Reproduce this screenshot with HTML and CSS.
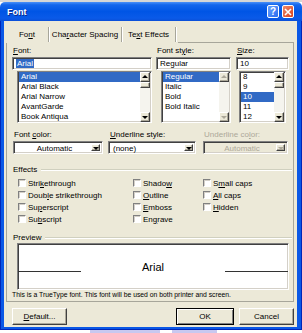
FILE: index.html
```html
<!DOCTYPE html>
<html lang="en">
<head>
  <meta charset="UTF-8" />
  <title>Font</title>
  <link rel="stylesheet" href="styles.css">
</head>
<body>

<div class="desk-top"></div>

<div class="window">
  <div class="titlebar">
    <span class="title">Font</span>
    <div class="caption-buttons">
      <span class="cap-btn help">?</span>
      <span class="cap-btn close">
        <svg width="8" height="8" viewBox="0 0 8 8"><path d="M1 1L7 7M7 1L1 7" stroke="#fff" stroke-width="1.6" /></svg>
      </span>
    </div>
  </div>

  <div class="frame">
    <div class="client">

      <div class="tabs">
        <span class="tab tab-font">Fo<u>n</u>t</span>
        <span class="tab tab-spacing">Cha<u>r</u>acter Spacing</span>
        <span class="tab tab-effects">Te<u>x</u>t Effects</span>
        <span class="tab-rest"></span>
      </div>

      <div class="panel">

        <div class="font-row">
          <div class="col col-font">
            <div class="label"><u>F</u>ont:</div>
            <div class="field"><span class="sel-text">Arial</span></div>
            <div class="listbox">
              <div class="items">
                <div class="item selected">Arial</div>
                <div class="item">Arial Black</div>
                <div class="item">Arial Narrow</div>
                <div class="item">AvantGarde</div>
                <div class="item">Book Antiqua</div>
              </div>
              <div class="scrollbar">
                <span class="sb-btn up"></span>
                <span class="sb-thumb"></span>
                <span class="sb-track"></span>
                <span class="sb-btn down"></span>
              </div>
            </div>
          </div>

          <div class="col col-style">
            <div class="label">Font st<u>y</u>le:</div>
            <div class="field">Regular</div>
            <div class="listbox">
              <div class="items">
                <div class="item selected">Regular</div>
                <div class="item">Italic</div>
                <div class="item">Bold</div>
                <div class="item">Bold Italic</div>
              </div>
              <div class="scrollbar disabled">
                <span class="sb-btn up"></span>
                <span class="sb-track"></span>
                <span class="sb-btn down"></span>
              </div>
            </div>
          </div>

          <div class="col col-size">
            <div class="label"><u>S</u>ize:</div>
            <div class="field">10</div>
            <div class="listbox">
              <div class="items">
                <div class="item">8</div>
                <div class="item">9</div>
                <div class="item selected">10</div>
                <div class="item">11</div>
                <div class="item">12</div>
              </div>
              <div class="scrollbar">
                <span class="sb-btn up"></span>
                <span class="sb-thumb"></span>
                <span class="sb-track"></span>
                <span class="sb-btn down"></span>
              </div>
            </div>
          </div>
        </div>

        <div class="combo-row">
          <div class="combo-col">
            <div class="label">Font <u>c</u>olor:</div>
            <div class="combo combo-color">
              <span class="combo-value centered">Automatic</span>
              <span class="drop-btn"></span>
            </div>
          </div>
          <div class="combo-col">
            <div class="label indent"><u>U</u>nderline style:</div>
            <div class="combo combo-underline">
              <span class="combo-value">(none)</span>
              <span class="drop-btn"></span>
            </div>
          </div>
          <div class="combo-col disabled">
            <div class="label">Underline co<u>l</u>or:</div>
            <div class="combo combo-ucolor">
              <span class="combo-value centered">Automatic</span>
              <span class="drop-btn"></span>
            </div>
          </div>
        </div>

        <div class="group-head effects-head"><span>Effects</span><span class="rule"></span></div>

        <div class="effects">
          <label class="check"><span class="box"></span><span>Stri<u>k</u>ethrough</span></label>
          <label class="check"><span class="box"></span><span>Doub<u>l</u>e strikethrough</span></label>
          <label class="check"><span class="box"></span><span>Su<u>p</u>erscript</span></label>
          <label class="check"><span class="box"></span><span>Su<u>b</u>script</span></label>
          <label class="check"><span class="box"></span><span>Shado<u>w</u></span></label>
          <label class="check"><span class="box"></span><span><u>O</u>utline</span></label>
          <label class="check"><span class="box"></span><span><u>E</u>mboss</span></label>
          <label class="check"><span class="box"></span><span>En<u>g</u>rave</span></label>
          <label class="check"><span class="box"></span><span>S<u>m</u>all caps</span></label>
          <label class="check"><span class="box"></span><span><u>A</u>ll caps</span></label>
          <label class="check"><span class="box"></span><span><u>H</u>idden</span></label>
        </div>

        <div class="group-head preview-head"><span>Preview</span><span class="rule"></span></div>

        <div class="preview">
          <span class="base-line"></span>
          <span class="sample">Arial</span>
          <span class="base-line"></span>
        </div>

        <p class="note">This is a TrueType font. This font will be used on both printer and screen.</p>
      </div>

      <div class="buttons">
        <button class="btn btn-default"><u>D</u>efault...</button>
        <button class="btn btn-ok">OK</button>
        <button class="btn btn-cancel">Cancel</button>
      </div>

    </div>
  </div>
</div>

<div class="desk-bottom">
  <span class="patch patch-a"></span>
  <span class="patch patch-b"></span>
</div>

</body>
</html>
```

FILE: styles.css
```css
* {
  box-sizing: border-box;
}

body {
  margin: 0;
  width: 302px;
  height: 333px;
  overflow: hidden;
  background: #fff;
  font-family: "Liberation Sans", Arial, sans-serif;
  font-size: 8px;
  color: #000;
}

u {
  text-underline-offset: 1px;
}

.desk-top {
  height: 2px;
  background: #d6d6d6;
}

/* window frame */

.window {
  height: 328px;
  display: flex;
  flex-direction: column;
}

.titlebar {
  height: 19px;
  display: flex;
  align-items: center;
  justify-content: space-between;
  padding: 0 8px 0 7px;
  border-radius: 5px 5px 0 0;
  background: linear-gradient(#4a90f8 0%, #1466ec 15%, #0055e5 50%, #0a5ae8 85%, #0a4fd8 100%);
}

.title {
  color: #fff;
  font-weight: bold;
  font-size: 9px;
  text-shadow: 1px 1px #0a2a8a;
}

.caption-buttons {
  display: flex;
  gap: 3px;
}

.cap-btn {
  width: 12px;
  height: 13px;
  border: 1px solid #fff;
  border-radius: 2px;
  display: flex;
  align-items: center;
  justify-content: center;
  color: #fff;
  font-weight: bold;
  font-size: 10px;
}

.help {
  background: linear-gradient(135deg, #6aa2ff, #2a6cf0);
}

.close {
  background: linear-gradient(135deg, #f08a6a, #d8401c);
}

.frame {
  flex: 1;
  display: flex;
  padding: 0 5px 3px 4px;
  background: #0a58e6;
  box-shadow: inset 1px 0 #0026b8, inset -1px 0 #0026b8, inset 0 -1px #0026b8;
}

.client {
  flex: 1;
  background: #ece9d8;
  padding: 6px 3px 0 2px;
  display: flex;
  flex-direction: column;
}

/* tabs */

.tabs {
  height: 16px;
  display: flex;
}

.tab {
  height: 15px;
  line-height: 15px;
  text-align: center;
  border-right: 1px solid #a7a69a;
  box-shadow: 1px 0 #fff;
}

.tab-font {
  width: 43px;
}

.tab-spacing {
  width: 73px;
}

.tab-effects {
  width: 54px;
}

.tab-rest {
  flex: 1;
  border-bottom: 1px solid #a7a69a;
  margin-left: 2px;
}

.panel {
  height: 259px;
  border: 1px solid #a7a69a;
  border-top: none;
  padding: 3px 4px 0 5px;
}

/* font / style / size */

.font-row {
  display: flex;
}

.col-font {
  width: 144px;
}

.col-style {
  width: 80px;
}

.col-size {
  width: 53px;
}

.label {
  height: 10px;
  line-height: 10px;
  padding-left: 1px;
  white-space: nowrap;
}

.label.indent {
  padding-left: 2px;
}

.field,
.listbox,
.combo,
.preview {
  background: #fff;
  border: 1px solid;
  border-color: #808080 #fff #fff #808080;
  box-shadow: inset 1px 1px #404040, inset -1px -1px #d4d0c8;
}

.field {
  margin-top: 1px;
  height: 13px;
  line-height: 11px;
  padding-left: 3px;
}

.col-font .field {
  width: 140px;
}

.col-style .field {
  width: 75px;
}

.col-size .field {
  width: 53px;
}

.sel-text {
  background: #316ac5;
  color: #fff;
  padding: 0 1px;
}

.listbox {
  margin-top: 1px;
  height: 52px;
  padding: 0 1px 0 1px;
  display: flex;
}

.col-font .listbox {
  margin-left: 5px;
  width: 135px;
}

.col-style .listbox {
  margin-left: 5px;
  width: 70px;
}

.col-size .listbox {
  margin-left: 3px;
  width: 47px;
}

.items {
  flex: 1;
  overflow: hidden;
}

.item {
  height: 10px;
  line-height: 10px;
  padding-left: 2px;
  white-space: nowrap;
}

.item.selected {
  background: #316ac5;
  color: #fff;
}

.scrollbar {
  width: 10px;
  display: flex;
  flex-direction: column;
}

.sb-btn,
.sb-thumb,
.drop-btn {
  background: #ece9d8;
  border: 1px solid;
  border-color: #fff #404040 #404040 #fff;
  box-shadow: inset -1px -1px #aca899;
  position: relative;
}

.sb-btn {
  height: 10px;
}

.sb-thumb {
  height: 6px;
}

.sb-track {
  flex: 1;
  background: #f5f4ee;
}

.sb-btn::after,
.drop-btn::after {
  content: "";
  position: absolute;
  left: 50%;
  top: 50%;
  margin-left: -3px;
  border-left: 3px solid transparent;
  border-right: 3px solid transparent;
}

.sb-btn.up::after {
  margin-top: -2px;
  border-bottom: 3px solid #000;
}

.sb-btn.down::after,
.drop-btn::after {
  margin-top: -1px;
  border-top: 3px solid #000;
}

.scrollbar.disabled .sb-btn.up::after {
  border-bottom-color: #aca899;
}

.scrollbar.disabled .sb-btn.down::after {
  border-top-color: #aca899;
}

/* combos */

.combo-row {
  margin-top: 7px;
  margin-left: 1px;
  display: grid;
  grid-template-columns: 95px 95px 85px;
}

.combo {
  margin-top: 1px;
  height: 13px;
  display: flex;
  padding: 2px;
}

.combo-color {
  width: 90px;
}

.combo-underline {
  width: 88px;
}

.combo-ucolor {
  width: 85px;
}

.combo-value {
  flex: 1;
  line-height: 9px;
  padding-left: 2px;
}

.combo-value.centered {
  text-align: center;
}

.drop-btn {
  width: 9px;
}

.combo-col.disabled {
  color: #aca899;
}

.combo-col.disabled .combo {
  background: #ece9d8;
}

.combo-col.disabled .drop-btn::after {
  border-top-color: #aca899;
}

/* groups */

.group-head {
  height: 10px;
  line-height: 10px;
  display: flex;
  align-items: center;
  padding-left: 1px;
}

.group-head .rule {
  flex: 1;
  margin-left: 4px;
  margin-right: -3px;
  border-top: 1px solid #d0d0bf;
  border-bottom: 1px solid #fff;
}

.effects-head {
  margin-top: 11px;
}

.effects {
  margin-top: 2px;
  margin-left: 6px;
  display: grid;
  grid-auto-flow: column;
  grid-template-rows: repeat(4, 12px);
  grid-template-columns: 115px 70px auto;
}

.check {
  display: flex;
  align-items: center;
  gap: 2px;
  white-space: nowrap;
}

.box {
  width: 8px;
  height: 8px;
  background: #fff;
  border: 1px solid;
  border-color: #808080 #fff #fff #808080;
  box-shadow: inset 1px 1px #d4d0c8;
}

.preview-head {
  margin-top: 8px;
}

.preview {
  margin-left: 5px;
  width: 272px;
  height: 47px;
  display: flex;
  align-items: center;
  justify-content: space-between;
}

.base-line {
  width: 63px;
  margin-top: 9px;
  border-top: 1px solid #333;
}

.sample {
  font-size: 11px;
}

.note {
  margin: 0;
  height: 10px;
  line-height: 10px;
  font-size: 6.8px;
}

/* buttons */

.buttons {
  margin-top: 6px;
  display: flex;
}

.btn {
  height: 17px;
  padding: 0;
  font-family: inherit;
  font-size: 8px;
  color: #000;
  background: #ece9d8;
  border: 1px solid;
  border-color: #fff #404040 #404040 #fff;
  box-shadow: inset -1px -1px #aca899;
}

.btn-default {
  width: 55px;
  margin-left: 6px;
}

.btn-ok {
  width: 58px;
  margin-left: auto;
  border-color: #000;
  box-shadow: inset 1px 1px #fff, inset -1px -1px #808080;
}

.btn-cancel {
  width: 55px;
  margin-left: 5px;
}

.desk-bottom {
  height: 3px;
  display: flex;
}

.patch {
  background: #c8c8f0;
}

.patch-a {
  margin-left: 90px;
  width: 70px;
}

.patch-b {
  margin-left: 12px;
  width: 45px;
}
```
